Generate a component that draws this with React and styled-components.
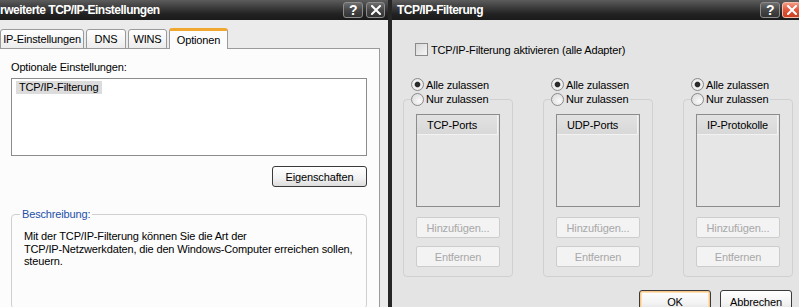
import React from 'react';
import styled, { createGlobalStyle } from 'styled-components';

const GlobalStyle = createGlobalStyle`
  html, body {
    margin: 0;
    padding: 0;
    background: #e4e4e4;
  }
  body {
    font-family: "Liberation Sans", Arial, sans-serif;
    font-size: 11px;
    letter-spacing: -0.15px;
    color: #000;
  }
`;

const Screen = styled.div`
  display: flex;
  width: 799px;
  height: 307px;
  overflow: hidden;
`;

const Dialog = styled.div`
  flex: 0 0 ${p => p.$width}px;
  display: flex;
  flex-direction: column;
  background: ${p => p.$bg};
  border-right: ${p => (p.$frame ? '4px solid #262626' : 'none')};
  box-sizing: border-box;
  overflow: hidden;
`;

const TitleBar = styled.div`
  flex: 0 0 20px;
  display: flex;
  align-items: center;
  padding: 0 ${p => p.$padRight}px 0 ${p => p.$padLeft}px;
  background: linear-gradient(#5c5c5c, #3a3a3a 40%, #222 70%, #1a1a1a);
  color: #fff;
  font-weight: bold;
  font-size: 12px;
  letter-spacing: -0.5px;
`;

const Title = styled.span`
  flex: 1;
  white-space: nowrap;
`;

const CapButton = styled.div`
  flex: none;
  width: ${p => p.$w}px;
  height: 16px;
  margin-left: ${p => p.$gap}px;
  box-sizing: border-box;
  border: 1px solid ${p => (p.$red ? '#f0c0b0' : '#8c8c8c')};
  border-radius: 3px;
  background: ${p =>
    p.$red
      ? 'linear-gradient(#f39a82, #e0573c 50%, #cc3e22)'
      : 'linear-gradient(#6e6e6e, #474747 50%, #333)'};
  display: flex;
  align-items: center;
  justify-content: center;
  font-size: 14px;
  font-weight: bold;
  color: #fff;
`;

/* ---------- left dialog ---------- */

const LeftBody = styled.div`
  flex: 1;
  display: flex;
  flex-direction: column;
  padding-top: 8px;
  padding-right: 8px;
`;

const TabRow = styled.div`
  display: flex;
  align-items: flex-end;
  height: 21px;
  position: relative;
  z-index: 1;
`;

const Tab = styled.div`
  width: ${p => p.$w}px;
  height: ${p => (p.$active ? 21 : 20)}px;
  margin-right: ${p => (p.$active ? 0 : 2)}px;
  box-sizing: border-box;
  border: 1px solid #9a9a9a;
  border-bottom: ${p => (p.$active ? 'none' : '1px solid #9a9a9a')};
  border-top: ${p => (p.$active ? '3px solid #f0a830' : '1px solid #9a9a9a')};
  border-radius: 3px 3px 0 0;
  background: ${p => (p.$active ? '#fcfcfc' : 'linear-gradient(#ffffff, #ececec)')};
  display: flex;
  align-items: center;
  justify-content: center;
  white-space: nowrap;
  padding-bottom: ${p => (p.$active ? 1 : 0)}px;
`;

const TabPanel = styled.div`
  flex: 1;
  margin-top: -1px;
  background: #fcfcfc;
  border: 1px solid #9a9a9a;
  border-left: none;
  padding: 12px 12px 0 11px;
  display: flex;
  flex-direction: column;
`;

const Label = styled.div`
  line-height: 13px;
  white-space: nowrap;
`;

const ListBox = styled.div`
  height: 78px;
  margin-top: 4px;
  box-sizing: border-box;
  border: 1px solid #8c8c8c;
  background: #fff;
  padding: 2px 4px;
`;

const ListItem = styled.span`
  display: inline-block;
  line-height: 13px;
  padding: 0 3px;
  background: #dcdcdc;
`;

const ButtonRow = styled.div`
  display: flex;
  justify-content: flex-end;
  gap: ${p => p.$gap || 0}px;
  margin-top: ${p => p.$top}px;
`;

const PushButton = styled.div`
  width: ${p => p.$w}px;
  height: ${p => p.$h || 21}px;
  box-sizing: border-box;
  border: 1px solid #3a3a3a;
  border-radius: 3px;
  background: linear-gradient(#ffffff, #f2f2f2 60%, #dcdcdc);
  box-shadow: ${p => (p.$default ? 'inset 0 0 0 1px #f6c68a, inset 0 0 0 2px #fbe0b8' : 'none')};
  display: flex;
  align-items: center;
  justify-content: center;
  white-space: nowrap;
  flex: none;
`;

const Group = styled.fieldset`
  margin: ${p => p.$top || 0}px 0 0;
  min-width: 0;
  box-sizing: border-box;
  border: 1px solid #d0d0d0;
  border-radius: 4px;
  padding: ${p => p.$pad};
`;

const Legend = styled.legend`
  margin-left: ${p => p.$shift}px;
  padding: 0 2px 0 ${p => p.$padLeft ?? 2}px;
  line-height: ${p => p.$lh || 13}px;
  color: ${p => p.$color || '#000'};
`;

const Description = styled.div`
  line-height: 12.5px;
  white-space: nowrap;
`;

/* ---------- right dialog ---------- */

const RightBody = styled.div`
  flex: 1;
  display: flex;
  flex-direction: column;
  padding: 23px 10px 0 11px;
`;

const CheckRow = styled.label`
  display: flex;
  align-items: center;
  gap: 3px;
  margin-left: 12px;
  height: 13px;
  white-space: nowrap;
`;

const CheckBox = styled.span`
  width: 13px;
  height: 13px;
  box-sizing: border-box;
  border: 1px solid #8a8a8a;
  background: linear-gradient(135deg, #d8d8d8, #f6f6f6);
`;

const Columns = styled.div`
  display: grid;
  grid-template-columns: repeat(3, 110px);
  column-gap: 30px;
  margin-top: 21px;
`;

const Column = styled.div`
  display: flex;
  flex-direction: column;
`;

const RadioRow = styled.div`
  display: flex;
  align-items: center;
  gap: 2px;
  height: 15px;
  padding-left: ${p => p.$indent || 0}px;
  white-space: nowrap;
`;

const Radio = styled.span`
  width: 13px;
  height: 13px;
  box-sizing: border-box;
  border-radius: 50%;
  border: 1px solid #8a8a8a;
  background: ${p =>
    p.$checked
      ? 'radial-gradient(circle, #2a2a2a 0 2.4px, #9a9a9a 2.8px, #f4f4f4 3.4px, #d8d8d8 100%)'
      : 'radial-gradient(circle at 65% 65%, #fafafa, #d6d6d6)'};
`;

const ListView = styled.div`
  height: 93px;
  box-sizing: border-box;
  border: 1px solid #8c8c8c;
  background: #e6e6e6;
`;

const ListHeader = styled.div`
  height: 20px;
  box-sizing: border-box;
  margin-right: 1px;
  border-bottom: 1px solid #f2f2f2;
  border-right: 1px solid #f2f2f2;
  background: linear-gradient(#e2e2e2, #d8d8d8);
  display: flex;
  align-items: center;
  padding-left: ${p => p.$indent}px;
  white-space: nowrap;
`;

const DisabledButton = styled.div`
  height: 21px;
  margin-top: ${p => p.$top}px;
  box-sizing: border-box;
  border: 1px solid #cdcdcd;
  border-radius: 2px;
  background: #f3f3f3;
  color: #a8a8a8;
  display: flex;
  align-items: center;
  justify-content: center;
  white-space: nowrap;
`;

const CloseGlyph = ({ size = 10 }) => (
  <svg width={size} height={size} viewBox="0 0 10 10">
    <path d="M1 1 L9 9 M9 1 L1 9" stroke="#fff" strokeWidth="2" strokeLinecap="square" />
  </svg>
);

const filters = [
  { header: 'TCP-Ports', indent: 10 },
  { header: 'UDP-Ports', indent: 10 },
  { header: 'IP-Protokolle', indent: 10 },
];

const FilterColumn = ({ header, indent }) => (
  <Column>
    <RadioRow $indent={8}>
      <Radio $checked />
      Alle zulassen
    </RadioRow>
    <Group $pad="7px 12px 9px 12px">
      <Legend $shift={-5} $padLeft={0} $lh={15}>
        <RadioRow>
          <Radio />
          Nur zulassen
        </RadioRow>
      </Legend>
      <ListView>
        <ListHeader $indent={indent}>{header}</ListHeader>
      </ListView>
      <DisabledButton $top={10}>Hinzufügen...</DisabledButton>
      <DisabledButton $top={8}>Entfernen</DisabledButton>
    </Group>
  </Column>
);

export default function App() {
  return (
    <>
      <GlobalStyle />
      <Screen>
        <Dialog $width={392} $bg="#ebebeb" $frame>
          <TitleBar $padLeft={0} $padRight={3}>
            <Title>rweiterte TCP/IP-Einstellungen</Title>
            <CapButton $w={20} $gap={0}>?</CapButton>
            <CapButton $w={19} $gap={3}>
              <CloseGlyph />
            </CapButton>
          </TitleBar>
          <LeftBody>
            <TabRow>
              <Tab $w={84}>IP-Einstellungen</Tab>
              <Tab $w={40}>DNS</Tab>
              <Tab $w={39}>WINS</Tab>
              <Tab $w={59} $active>Optionen</Tab>
            </TabRow>
            <TabPanel>
              <Label>Optionale Einstellungen:</Label>
              <ListBox>
                <ListItem>TCP/IP-Filterung</ListItem>
              </ListBox>
              <ButtonRow $top={10}>
                <PushButton $w={95}>Eigenschaften</PushButton>
              </ButtonRow>
              <Group $top={21} $pad="9px 12px 40px 12px">
                <Legend $shift={-4} $color="#2450a8">Beschreibung:</Legend>
                <Description>
                  Mit der TCP/IP-Filterung können Sie die Art der
                  <br />
                  TCP/IP-Netzwerkdaten, die den Windows-Computer erreichen sollen,
                  <br />
                  steuern.
                </Description>
              </Group>
            </TabPanel>
          </LeftBody>
        </Dialog>

        <Dialog $width={410} $bg="#e4e4e4">
          <TitleBar $padLeft={5} $padRight={1}>
            <Title>TCP/IP-Filterung</Title>
            <CapButton $w={20} $gap={0}>?</CapButton>
            <CapButton $w={19} $gap={2} $red>
              <CloseGlyph />
            </CapButton>
          </TitleBar>
          <RightBody>
            <CheckRow>
              <CheckBox />
              TCP/IP-Filterung aktivieren (alle Adapter)
            </CheckRow>
            <Columns>
              {filters.map(f => (
                <FilterColumn key={f.header} {...f} />
              ))}
            </Columns>
            <ButtonRow $top={13} $gap={9}>
              <PushButton $w={72} $h={23} $default>OK</PushButton>
              <PushButton $w={72} $h={23}>Abbrechen</PushButton>
            </ButtonRow>
          </RightBody>
        </Dialog>
      </Screen>
    </>
  );
}
